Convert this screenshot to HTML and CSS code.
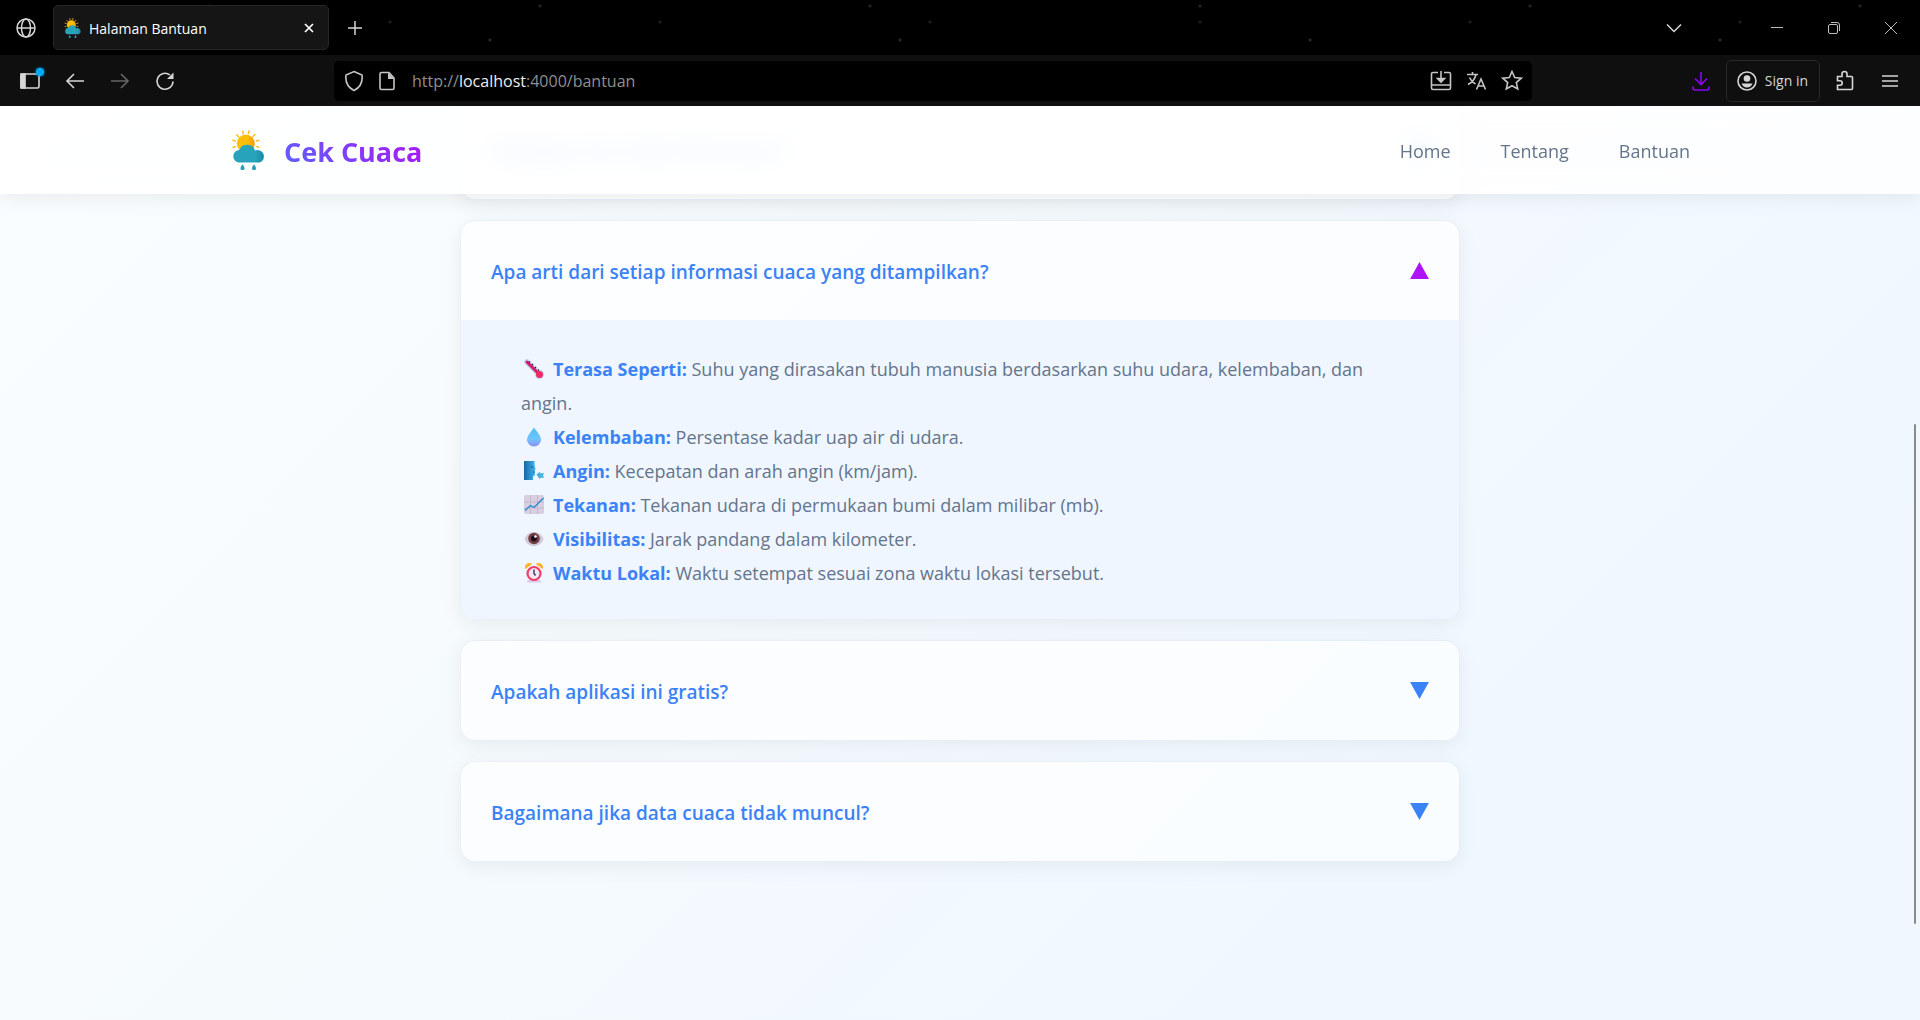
FILE: index.html
```html
<!DOCTYPE html>
<html lang="id">
<head>
<meta charset="utf-8">
<meta name="viewport" content="width=device-width, initial-scale=1">
<title>Halaman Bantuan</title>
<link rel="stylesheet" href="styles.css">
</head>
<body>
<svg class="defs" aria-hidden="true">
  <defs>
    <linearGradient id="sun-fill" x1="0" x2="1"><stop offset=".55" stop-color="#fbc005"/><stop offset="1" stop-color="#f59a17"/></linearGradient>
    <linearGradient id="cloud-fill" x1="0" x2="1"><stop offset=".7" stop-color="#27a3bb"/><stop offset="1" stop-color="#1b8ca5"/></linearGradient>
    <linearGradient id="drop-fill" x1="0" y1="0" x2="0" y2="1"><stop offset="0" stop-color="#4cc0f5"/><stop offset=".6" stop-color="#6fc3fb"/><stop offset="1" stop-color="#8b8ef8"/></linearGradient>
    <linearGradient id="face-fill" x1="0" x2="1"><stop offset="0" stop-color="#1667a3"/><stop offset="1" stop-color="#3fb6ee"/></linearGradient>
    <symbol id="weather" viewBox="0 0 34 40">
      <g stroke="#fbc21c" stroke-width="1.6" stroke-linecap="round">
        <path d="M10.8 1.2l.5 2.4M17 1l-.5 2.500M4.800 4.800l1.600 1.900M22.800 4.600l-1.700 2M1 10.200l2.300.7M26.800 10.200l-2.400.7M1 17.400l2.300-.8M26.800 17.200l-2-.6"/>
      </g>
      <circle cx="13.800" cy="13.500" r="9" fill="url(#sun-fill)"/>
      <path d="M8 22a8 8 0 0 1 14-4l-6 6H8z" fill="#f5941d"/>
      <path d="M6.500 32.500a6.300 6.300 0 0 1 .8-12.500A8.300 8.300 0 0 1 23 20.500a6.100 6.100 0 1 1 5 12z" fill="url(#cloud-fill)"/>
      <path d="M10.500 34.200c1.400 2 2 2.800 2 4a2 2 0 0 1-4 0c0-1.200.6-2 2-4zM22 34.200c1.400 2 2 2.800 2 4a2 2 0 0 1-4 0c0-1.200.6-2 2-4z" fill="#27a0b8"/>
    </symbol>
  </defs>
</svg>

<div class="window">
  <div class="tabbar">
    <button class="tool globe" aria-label="Ruang kerja"><svg width="20" height="20" viewBox="0 0 20 20"><circle cx="10" cy="10" r="9"/><ellipse cx="10" cy="10" rx="4.500" ry="9"/><path d="M1 10h18"/></svg></button>
    <div class="tab">
      <svg class="favicon" aria-hidden="true"><use href="#weather"/></svg>
      <span class="tab-title">Halaman Bantuan</span>
      <button class="tool" aria-label="Tutup tab"><svg class="strong" width="10" height="10" viewBox="0 0 10 10"><path d="M1 1l8 8M9 1l-8 8"/></svg></button>
    </div>
    <button class="tool new-tab" aria-label="Tab baru"><svg width="16" height="16" viewBox="0 0 16 16"><path d="M8 1v14M1 8h14"/></svg></button>
    <div class="window-controls">
      <button class="tool tab-list" aria-label="Daftar tab"><svg width="16" height="10" viewBox="0 0 16 10"><path d="M1 1.500l7 7 7-7"/></svg></button>
      <button class="tool" aria-label="Kecilkan"><svg class="thin" width="14" height="14" viewBox="0 0 14 14"><path d="M1 6.500h12"/></svg></button>
      <button class="tool" aria-label="Pulihkan"><svg class="thin" width="14" height="14" viewBox="0 0 14 14"><rect x="1.500" y="3.500" width="9" height="9" rx="1.500"/><path d="M4 1.500h6a2.500 2.500 0 0 1 2.500 2.500v6"/></svg></button>
      <button class="tool" aria-label="Tutup"><svg class="thin" width="14" height="14" viewBox="0 0 14 14"><path d="M1 1l12 12M13 1L1 13"/></svg></button>
    </div>
  </div>

  <div class="toolbar">
    <div class="history">
      <button class="tool sidebar" aria-label="Bilah samping"><svg width="20" height="16" viewBox="0 0 20 16"><rect x="1" y="1" width="18" height="14" rx="1.500"/><path d="M1 1h4v14H1z" fill="#d6d6d6"/></svg><span class="badge"></span></button>
      <button class="tool" aria-label="Kembali"><svg width="20" height="20" viewBox="0 0 20 20"><path d="M19 10H2M9 3l-7 7 7 7"/></svg></button>
      <button class="tool" aria-label="Maju" disabled><svg width="20" height="20" viewBox="0 0 20 20"><path d="M1 10h17M11 3l7 7-7 7"/></svg></button>
      <button class="tool" aria-label="Muat ulang"><svg width="20" height="20" viewBox="0 0 20 20"><path d="M18 10.500A8 8 0 1 1 15 4"/><path d="M18.500 1.500V8H12z" fill="#d6d6d6" stroke="none"/></svg></button>
    </div>
    <div class="address">
      <button class="tool" aria-label="Perlindungan"><svg width="20" height="22" viewBox="0 0 20 22"><path d="M10 1.500L18 5c1 8-3 13-8 15.500C5 18 1 13 2 5z"/></svg></button>
      <button class="tool" aria-label="Info situs"><svg width="18" height="20" viewBox="0 0 18 20"><path d="M3.500 1.500H11L16 7v10a1.500 1.500 0 0 1-1.500 1.500h-11A1.500 1.500 0 0 1 2 17V3a1.500 1.500 0 0 1 1.500-1.500z"/><path d="M10 1.500L16.500 8H10z" fill="#c4c4c4" stroke="none"/></svg></button>
      <div class="url">http://<b>localhost</b>:4000/bantuan</div>
      <button class="tool" aria-label="Pasang"><svg width="22" height="20" viewBox="0 0 22 20"><path d="M8 1.500H3A1.500 1.500 0 0 0 1.500 3v14A1.500 1.500 0 0 0 3 18.500h16a1.500 1.500 0 0 0 1.500-1.500V3A1.500 1.500 0 0 0 19 1.500h-5M1.500 14h19M11 0v9"/><path d="M7.500 7.500h7L11 11z" fill="#c4c4c4"/></svg></button>
      <button class="tool" aria-label="Terjemahkan"><svg width="21" height="20" viewBox="0 0 21 20"><path d="M1 3.500h11M6.500 1v2.500M10 3.500C9 8 6 11.500 2 13.500M3.500 6.500c1.200 3 3.500 5 6 6.500M10.500 18.500L15 8l4.500 10.500M12 15h6"/></svg></button>
      <button class="tool" aria-label="Markah"><svg width="22" height="21" viewBox="0 0 22 21"><path d="M11 1.500l2.700 6 6.500.7-4.900 4.400 1.400 6.400L11 15.700 5.300 19l1.400-6.400L1.800 8.200l6.500-.7z"/></svg></button>
    </div>
    <div class="actions">
      <button class="tool download" aria-label="Unduhan"><svg width="18" height="20" viewBox="0 0 18 20"><path d="M9 1v12M3 7.500l6 6 6-6M1 15.500v1.500a2 2 0 0 0 2 2h12a2 2 0 0 0 2-2v-1.500"/></svg></button>
      <button class="sign-in"><svg width="20" height="20" viewBox="0 0 20 20"><circle cx="10" cy="10" r="9"/><g fill="#d6d6d6" stroke="none"><circle cx="10" cy="7.500" r="3.300"/><path d="M4.500 12.500h11c-1 2.500-3 4-5.500 4s-4.500-1.500-5.500-4z"/></g></svg>Sign in</button>
      <button class="tool" aria-label="Ekstensi"><svg width="18" height="21" viewBox="0 0 18 21"><path d="M1.500 19.500v-4.300H4a2 2 0 0 0 0-4.400H1.500V6.500H6V4a2.500 2.500 0 0 1 5 0v2.500h4.500a1 1 0 0 1 1 1v11a1 1 0 0 1-1 1z"/></svg></button>
      <button class="tool menu" aria-label="Menu"><svg width="16" height="14" viewBox="0 0 16 14"><path d="M0 2h16M0 7h16M0 12h16"/></svg></button>
    </div>
  </div>

  <div class="viewport">
    <main class="faq">
      <section class="card">
        <h2><button class="question" aria-expanded="false"><span>Mengapa kota tidak ditemukan?</span><svg class="arrow" viewBox="0 0 20 18"><path d="M0 0h20L10 18z"/></svg></button></h2>
      </section>
      <section class="card open">
        <h2><button class="question" aria-expanded="true"><span>Apa arti dari setiap informasi cuaca yang ditampilkan?</span><svg class="arrow" viewBox="0 0 20 18"><path d="M10 0l10 18H0z"/></svg></button></h2>
        <ul class="answer">
          <li><svg class="emoji" viewBox="0 0 20 20"><path d="M3 3l11 11" stroke="#b9d3f3" stroke-width="5.500" stroke-linecap="round"/><circle cx="15.500" cy="15.500" r="4.500" fill="#c3d5f5"/><path d="M3 3l12 12" stroke="#d81b67" stroke-width="3" stroke-linecap="round"/><circle cx="15.500" cy="15.500" r="3.500" fill="#ee2b62"/><path d="M6 2.500l-1 1M9 5l-1 1M12 8l-1 1M15 10.500l-1 1" stroke="#38204d" stroke-width="1.300"/></svg><strong>Terasa Seperti:</strong> Suhu yang dirasakan tubuh manusia berdasarkan suhu udara, kelembaban, dan angin.</li>
          <li><svg class="emoji" viewBox="0 0 20 20"><path d="M10 .5c2 3.500 7 8 7 12.300a7 6.700 0 0 1-14 0C3 8.500 8 4 10 .5z" fill="url(#drop-fill)"/></svg><strong>Kelembaban:</strong> Persentase kadar uap air di udara.</li>
          <li><svg class="emoji" viewBox="0 0 20 20"><path d="M0 0h10.500v4l1 4-1 2 .5 4-2 1.500v3.500H0z" fill="url(#face-fill)"/><path d="M7 6h2M9 11h2" stroke="#15578d"/><path d="M12.500 13.500l3-2.500 1.500 1.500 3-.5-1 2.500 1 2.500-3-.5-1.500 1.500z" fill="#48b4dc"/></svg><strong>Angin:</strong> Kecepatan dan arah angin (km/jam).</li>
          <li><svg class="emoji" viewBox="0 0 20 20"><rect width="20" height="19" rx="2" fill="#d9cfe0"/><path d="M0 7h20M0 13h20M6.500 0v19M13.500 0v19" stroke="#bfb2ca" stroke-width=".8"/><path d="M1 15.500l5.500-5 3.500 2L19.500 3" fill="none" stroke="#2489cf" stroke-width="1.400"/></svg><strong>Tekanan:</strong> Tekanan udara di permukaan bumi dalam milibar (mb).</li>
          <li><svg class="emoji" viewBox="0 0 20 20"><path d="M.5 10c3-9.500 16-9.500 19 0-3 9.500-16 9.500-19 0z" fill="#d0c9da"/><circle cx="10" cy="9.500" r="5.800" fill="#713f43"/><circle cx="10" cy="9.500" r="3" fill="#1d0d18"/><circle cx="11.500" cy="7.500" r="1.300" fill="#fff"/></svg><strong>Visibilitas:</strong> Jarak pandang dalam kilometer.</li>
          <li><svg class="emoji" viewBox="0 0 20 20"><path d="M4 17l-1.500 2.500h15L16 17z" fill="#dccbec"/><path d="M1.500 5.500a4 4 0 0 1 6-4.500zM18.500 5.500a4 4 0 0 0-6-4.500z" fill="#f7b52c" stroke="#f7b52c"/><circle cx="10" cy="10.500" r="6.500" fill="#f2e9f7" stroke="#ef3f68" stroke-width="2.200"/><path d="M10 6.500v4l1.500 2" fill="none" stroke="#4a2a55" stroke-width="1.400"/></svg><strong>Waktu Lokal:</strong> Waktu setempat sesuai zona waktu lokasi tersebut.</li>
        </ul>
      </section>
      <section class="card">
        <h2><button class="question" aria-expanded="false"><span>Apakah aplikasi ini gratis?</span><svg class="arrow" viewBox="0 0 20 18"><path d="M0 0h20L10 18z"/></svg></button></h2>
      </section>
      <section class="card">
        <h2><button class="question" aria-expanded="false"><span>Bagaimana jika data cuaca tidak muncul?</span><svg class="arrow" viewBox="0 0 20 18"><path d="M0 0h20L10 18z"/></svg></button></h2>
      </section>
    </main>
    <header class="site-header">
      <div class="header-inner">
        <a class="brand" href="#"><svg class="logo" aria-hidden="true"><use href="#weather"/></svg><span>Cek Cuaca</span></a>
        <nav><a href="#">Home</a><a href="#">Tentang</a><a href="#">Bantuan</a></nav>
      </div>
    </header>
    <div class="scroll-thumb"></div>
  </div>
</div>
</body>
</html>
```
FILE: styles.css
```css
* { box-sizing: border-box; }

body {
  margin: 0;
  font-family: "Open Sans", "Noto Sans", sans-serif;
  background: #000;
}

.defs { position: absolute; width: 0; height: 0; }

button { font: inherit; border: 0; padding: 0; background: none; color: inherit; cursor: pointer; }

.window { display: flex; flex-direction: column; height: 100vh; overflow: hidden; }

/* Browser chrome */
.tabbar, .toolbar { display: flex; align-items: center; flex: none; color: #d6d6d6; }

.tabbar {
  height: 55px;
  padding: 0 22px 0 16px;
  background:
    radial-gradient(circle at 80px 40px, #2a2a2a 1px, transparent 2px) 0 0 / 410px 55px,
    radial-gradient(circle at 210px 6px, #242424 1px, transparent 2px) 0 0 / 330px 55px,
    radial-gradient(circle at 120px 22px, #1c1c1c 1px, transparent 2px) 0 0 / 270px 55px,
    #000;
}

.toolbar { height: 51px; padding: 0 22px 0 20px; background: #0f0f0f; }

.tool { display: grid; place-items: center; flex: none; }
.tool svg, .sign-in svg { display: block; fill: none; stroke: #d6d6d6; stroke-width: 1.6; }
.tabbar .tool svg { stroke-width: 1.5; }
.tabbar .tool svg.thin { stroke: #bdbdbd; stroke-width: 1; }
.tabbar .tool svg.strong { stroke: #fff; stroke-width: 1.7; }
.tool:disabled svg { stroke: #666; }

.tab {
  display: flex;
  align-items: center;
  width: 276px;
  height: 45px;
  margin-left: 17px;
  padding: 0 14px 0 10px;
  border: 1px solid #262626;
  border-radius: 5px;
  background: #151515;
  color: #fff;
  font-size: 14px;
}
.favicon { width: 18px; height: 20px; margin-right: 7px; }
.tab-title { flex: 1; padding-top: 2px; }
.new-tab { margin-left: 18px; }

.window-controls { display: flex; align-items: center; gap: 43px; margin-left: auto; }
.tab-list { margin-right: 45px; }

.history { display: flex; align-items: center; gap: 25px; }
.sidebar { position: relative; }
.badge { position: absolute; top: -5px; right: -4px; width: 8px; height: 8px; border-radius: 50%; background: #00aaf5; box-shadow: 0 0 3px #00aaf5; }

.address {
  display: flex;
  align-items: center;
  gap: 14px;
  flex: 1;
  height: 40px;
  margin: 0 160px 0 159px;
  padding: 0 9px 0 10px;
  border-radius: 5px;
  background: #000;
}
.address svg { stroke: #c4c4c4; }
.url { flex: 1; padding-left: 2px; font-size: 16px; color: #8f8f8f; }
.url b { font-weight: 400; color: #eee; }

.actions { display: flex; align-items: center; gap: 16px; }
.actions .menu { margin-left: 12px; }
.download svg { stroke: #8a05f5; }
.sign-in {
  display: flex;
  align-items: center;
  gap: 8px;
  height: 42px;
  padding: 0 11px 0 10px;
  border: 1px solid #282828;
  border-radius: 5px;
  font-size: 14px;
}

/* Page */
.viewport {
  display: grid;
  flex: 1;
  min-height: 0;
  overflow: hidden;
  position: relative;
  background: linear-gradient(135deg, #fafdff 0%, #f5fafd 40%, #f0f8ff 75%, #f0f7ff 100%);
}
.viewport > * { grid-area: 1 / 1; }

.site-header {
  align-self: start;
  height: 88px;
  background: rgba(255, 255, 255, .85);
  backdrop-filter: blur(12px);
  box-shadow: 0 4px 20px rgba(0, 0, 0, .07);
}
.header-inner {
  display: flex;
  align-items: center;
  justify-content: space-between;
  height: 100%;
  max-width: 1500px;
  margin: 0 auto;
  padding: 0 20px;
}
.brand { display: flex; align-items: center; gap: 16px; text-decoration: none; font-size: 27px; font-weight: 700; }
.brand span {
  padding-top: 2px;
  color: transparent;
  background: linear-gradient(45deg, #5a62ff, #b012f7);
  background-clip: text;
}
.logo { width: 38px; height: 40px; }
nav { display: flex; gap: 50px; padding-top: 2px; }
nav a { color: #64748b; text-decoration: none; font-size: 18px; }

.faq {
  display: flex;
  flex-direction: column;
  gap: 20px;
  width: 100%;
  max-width: 1000px;
  margin: -7px auto 0;
}
.card {
  flex: none;
  overflow: hidden;
  border: 1px solid rgba(226, 232, 245, .6);
  border-radius: 15px;
  background: rgba(255, 255, 255, .65);
  background-clip: padding-box;
  box-shadow: 0 5px 20px rgba(0, 0, 0, .06);
}
h2 { margin: 0; }
.question {
  display: flex;
  align-items: center;
  justify-content: space-between;
  width: 100%;
  height: 99px;
  padding: 0 30px;
  color: #3b82f6;
  font-size: 19px;
  font-weight: 600;
  text-align: left;
}
.question span { padding-top: 3px; }
.arrow { width: 19px; height: 17px; fill: #3b82f6; }
.open .arrow { fill: #b012f7; }

.answer {
  margin: 0;
  padding: 32px 60px 29px;
  list-style: none;
  background: #eff6ff;
  color: #64748b;
  font-size: 18px;
  line-height: 34px;
}
.answer strong { color: #3b82f6; font-weight: 700; }
.emoji { width: 20px; height: 20px; margin: 0 9px 0 3px; vertical-align: -3px; }

.scroll-thumb { position: absolute; right: 4px; top: 318px; width: 2px; height: 500px; border-radius: 2px; background: #8a8a8a; }
```
